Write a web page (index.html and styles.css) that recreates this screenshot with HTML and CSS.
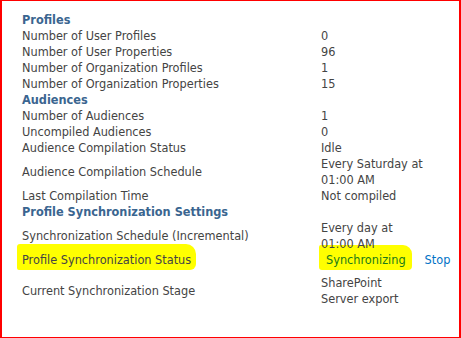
FILE: index.html
```html
<!DOCTYPE html>
<html>
    <head>
        <title>User Profile Service</title>
        <link rel="stylesheet" href="styles.css">
    </head>
    <body>
        <div id="frame">
            <table>
                <tr><td colspan="2" class="heading">Profiles</td></tr>
                <tr><td class="label">Number of User Profiles</td><td>0</td></tr>
                <tr><td class="label">Number of User Properties</td><td>96</td></tr>
                <tr><td class="label">Number of Organization Profiles</td><td>1</td></tr>
                <tr><td class="label">Number of Organization Properties</td><td>15</td></tr>
                <tr><td colspan="2" class="heading">Audiences</td></tr>
                <tr><td class="label">Number of Audiences</td><td>1</td></tr>
                <tr><td class="label">Uncompiled Audiences</td><td>0</td></tr>
                <tr><td class="label">Audience Compilation Status</td><td>Idle</td></tr>
                <tr><td class="label">Audience Compilation Schedule</td><td>Every Saturday at<br>01:00 AM</td></tr>
                <tr><td class="label">Last Compilation Time</td><td>Not compiled</td></tr>
                <tr><td colspan="2" class="heading">Profile Synchronization Settings</td></tr>
                <tr><td class="label">Synchronization Schedule (Incremental)</td><td>Every day at<br>01:00 AM</td></tr>
                <tr class="status">
                    <td class="label"><span class="mark mark-left">Profile Synchronization Status</span></td>
                    <td><span class="mark mark-right sync">Synchronizing</span><a href="#" class="stop">Stop</a></td>
                </tr>
                <tr><td class="label">Current Synchronization Stage</td><td>SharePoint<br>Server export</td></tr>
            </table>
        </div>
    </body>
</html>
```
FILE: styles.css
```css
html {
    background: white;
}

body {
    margin: 0;
    font-family: 'DejaVu Sans Condensed', 'DejaVu Sans', sans-serif;
    font-size: 12.6px;
    color: #444444;
}

#frame {
    width: 461px;
    height: 338px;
    border: 1px solid #ff0000;
    border-left-width: 2px;
    border-right-width: 2px;
    padding: 11px 0 0 20px;
    box-sizing: border-box;
}

table {
    border-collapse: collapse;
}

td {
    padding: 0;
    line-height: 16px;
    vertical-align: middle;
}

.label {
    width: 299px;
}

.heading {
    font-weight: bold;
    color: #3a6590;
}

.status td {
    padding: 0 0 7px;
}

.mark {
    position: relative;
}

.mark::before {
    content: "";
    position: absolute;
    z-index: -1;
    background: #ffff00;
}

.mark-left::before {
    top: -8px;
    bottom: -3px;
    left: -5px;
    right: -5px;
    border-radius: 3px 10px 6px 2px;
}

.mark-right::before {
    top: -7px;
    bottom: -3px;
    left: -7px;
    right: -6px;
    border-radius: 2px 9px 4px 3px;
}

.sync {
    margin-left: 5px;
    color: #1a7a1a;
}

.stop {
    margin-left: 19px;
    color: #0072c6;
    text-decoration: none;
}
```
